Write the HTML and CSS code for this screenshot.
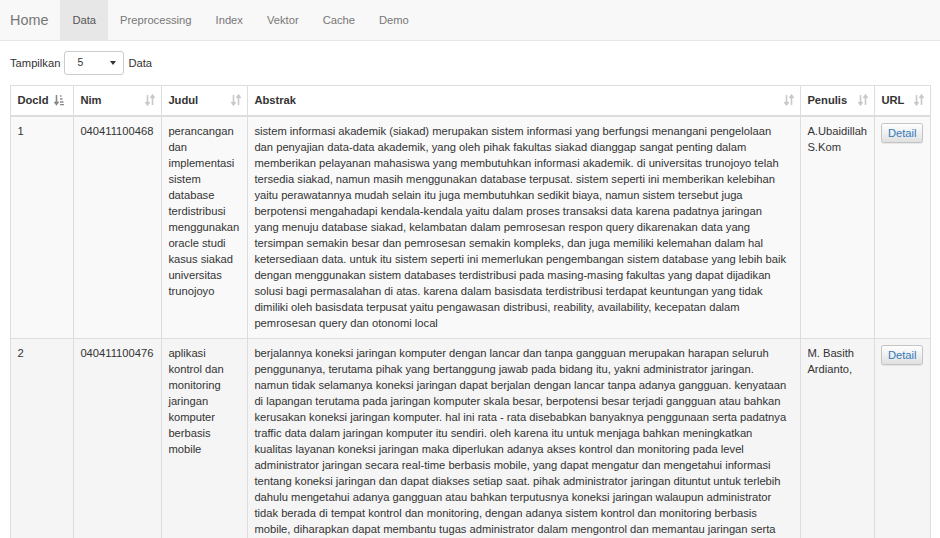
FILE: index.html
```html
<!DOCTYPE html>
<html lang="id">
<head>
<meta charset="utf-8">
<title>Data</title>
<link rel="stylesheet" href="styles.css">
</head>
<body>
<nav class="navbar">
  <a class="brand" href="#">Home</a>
  <ul class="nav">
    <li class="active"><a href="#">Data</a></li>
    <li><a href="#">Preprocessing</a></li>
    <li><a href="#">Index</a></li>
    <li><a href="#">Vektor</a></li>
    <li><a href="#">Cache</a></li>
    <li><a href="#">Demo</a></li>
  </ul>
</nav>
<main class="content">
  <div class="length">
    <span>Tampilkan</span>
    <div class="select"><span>5</span><svg class="caret" width="6" height="4" viewBox="0 0 6 4"><path d="M0 0H6L3 4Z" fill="#333"/></svg></div>
    <span>Data</span>
  </div>
  <table class="table">
    <colgroup>
      <col class="c-id"><col class="c-nim"><col class="c-judul"><col class="c-abs"><col class="c-pen"><col class="c-url">
    </colgroup>
    <thead>
      <tr>
        <th><div class="th"><span>DocId</span><svg class="sort active" width="10" height="12" viewBox="0 0 10 12"><path d="M2.5 1V10M0.5 7.8L2.5 10.5L4.5 7.8" stroke="currentColor" stroke-width="1.6" fill="none"/><path d="M6 2H7.5M6 5H8.5M6 8H9.5M6 10.6H10" stroke="currentColor" stroke-width="1.3"/></svg></div></th>
        <th><div class="th"><span>Nim</span><svg class="sort" width="10" height="12" viewBox="0 0 10 12"><path d="M2.5 1V10.5M0.5 8L2.5 10.8L4.5 8M7.5 11V1.5M5.5 4L7.5 1.2L9.5 4" stroke="currentColor" stroke-width="1.6" fill="none"/></svg></div></th>
        <th><div class="th"><span>Judul</span><svg class="sort" width="10" height="12" viewBox="0 0 10 12"><path d="M2.5 1V10.5M0.5 8L2.5 10.8L4.5 8M7.5 11V1.5M5.5 4L7.5 1.2L9.5 4" stroke="currentColor" stroke-width="1.6" fill="none"/></svg></div></th>
        <th><div class="th"><span>Abstrak</span><svg class="sort" width="10" height="12" viewBox="0 0 10 12"><path d="M2.5 1V10.5M0.5 8L2.5 10.8L4.5 8M7.5 11V1.5M5.5 4L7.5 1.2L9.5 4" stroke="currentColor" stroke-width="1.6" fill="none"/></svg></div></th>
        <th><div class="th"><span>Penulis</span><svg class="sort" width="10" height="12" viewBox="0 0 10 12"><path d="M2.5 1V10.5M0.5 8L2.5 10.8L4.5 8M7.5 11V1.5M5.5 4L7.5 1.2L9.5 4" stroke="currentColor" stroke-width="1.6" fill="none"/></svg></div></th>
        <th><div class="th"><span>URL</span><svg class="sort" width="10" height="12" viewBox="0 0 10 12"><path d="M2.5 1V10.5M0.5 8L2.5 10.8L4.5 8M7.5 11V1.5M5.5 4L7.5 1.2L9.5 4" stroke="currentColor" stroke-width="1.6" fill="none"/></svg></div></th>
      </tr>
    </thead>
    <tbody>
      <tr class="odd">
        <td>1</td>
        <td>040411100468</td>
        <td>perancangan dan implementasi sistem database terdistribusi menggunakan oracle studi kasus siakad universitas trunojoyo</td>
        <td class="abs">sistem informasi akademik (siakad) merupakan sistem informasi yang berfungsi menangani pengelolaan<br>dan penyajian data-data akademik, yang oleh pihak fakultas siakad dianggap sangat penting dalam<br>memberikan pelayanan mahasiswa yang membutuhkan informasi akademik. di universitas trunojoyo telah<br>tersedia siakad, namun masih menggunakan database terpusat. sistem seperti ini memberikan kelebihan<br>yaitu perawatannya mudah selain itu juga membutuhkan sedikit biaya, namun sistem tersebut juga<br>berpotensi mengahadapi kendala-kendala yaitu dalam proses transaksi data karena padatnya jaringan<br>yang menuju database siakad, kelambatan dalam pemrosesan respon query dikarenakan data yang<br>tersimpan semakin besar dan pemrosesan semakin kompleks, dan juga memiliki kelemahan dalam hal<br>ketersediaan data. untuk itu sistem seperti ini memerlukan pengembangan sistem database yang lebih baik<br>dengan menggunakan sistem databases terdistribusi pada masing-masing fakultas yang dapat dijadikan<br>solusi bagi permasalahan di atas. karena dalam basisdata terdistribusi terdapat keuntungan yang tidak<br>dimiliki oleh basisdata terpusat yaitu pengawasan distribusi, reability, availability, kecepatan dalam<br>pemrosesan query dan otonomi local</td>
        <td>A.Ubaidillah S.Kom</td>
        <td><button class="btn" type="button">Detail</button></td>
      </tr>
      <tr class="hover">
        <td>2</td>
        <td>040411100476</td>
        <td>aplikasi kontrol dan monitoring jaringan komputer berbasis mobile</td>
        <td class="abs">berjalannya koneksi jaringan komputer dengan lancar dan tanpa gangguan merupakan harapan seluruh<br>penggunanya, terutama pihak yang bertanggung jawab pada bidang itu, yakni administrator jaringan.<br>namun tidak selamanya koneksi jaringan dapat berjalan dengan lancar tanpa adanya gangguan. kenyataan<br>di lapangan terutama pada jaringan komputer skala besar, berpotensi besar terjadi gangguan atau bahkan<br>kerusakan koneksi jaringan komputer. hal ini rata - rata disebabkan banyaknya penggunaan serta padatnya<br>traffic data dalam jaringan komputer itu sendiri. oleh karena itu untuk menjaga bahkan meningkatkan<br>kualitas layanan koneksi jaringan maka diperlukan adanya akses kontrol dan monitoring pada level<br>administrator jaringan secara real-time berbasis mobile, yang dapat mengatur dan mengetahui informasi<br>tentang koneksi jaringan dan dapat diakses setiap saat. pihak administrator jaringan dituntut untuk terlebih<br>dahulu mengetahui adanya gangguan atau bahkan terputusnya koneksi jaringan walaupun administrator<br>tidak berada di tempat kontrol dan monitoring, dengan adanya sistem kontrol dan monitoring berbasis<br>mobile, diharapkan dapat membantu tugas administrator dalam mengontrol dan memantau jaringan serta<br>mengetahui informasi jaringan secara cepat dan tepat.</td>
        <td>M. Basith Ardianto,</td>
        <td><button class="btn" type="button">Detail</button></td>
      </tr>
    </tbody>
  </table>
</main>
</body>
</html>
```
FILE: styles.css
```css
* { box-sizing: border-box; }
html, body { margin: 0; padding: 0; }
body {
  font-family: "Liberation Sans", Arial, Helvetica, sans-serif;
  font-size: 11.2px;
  line-height: 16px;
  color: #333;
  background: #fff;
  overflow: hidden;
}
a { text-decoration: none; }

.navbar {
  display: flex;
  align-items: stretch;
  height: 41px;
  background: #f8f8f8;
  border-bottom: 1px solid #e7e7e7;
}
.brand {
  display: block;
  padding: 0 12px 0 10px;
  font-size: 14.4px;
  line-height: 40px;
  color: #777;
}
.nav {
  display: flex;
  margin: 0;
  padding: 0;
  list-style: none;
}
.nav li a {
  display: block;
  padding: 0 12px;
  line-height: 40px;
  color: #777;
}
.nav li.active a {
  background: #e7e7e7;
  color: #555;
}

.content { padding: 10px 10px 0 10px; }

.length {
  display: flex;
  align-items: center;
  gap: 4px;
  height: 24px;
  margin-bottom: 10px;
}
.select {
  display: flex;
  align-items: center;
  justify-content: space-between;
  width: 60px;
  height: 24px;
  padding: 0 7px 0 12px;
  border: 1px solid #ccc;
  border-radius: 3px;
  background: #fff;
  font-size: 10.4px;
}
.caret { display: block; }

.table {
  width: 920px;
  table-layout: fixed;
  border-collapse: collapse;
  border: 1px solid #ddd;
}
.c-id { width: 63px; }
.c-nim { width: 88px; }
.c-judul { width: 86px; }
.c-abs { width: 553px; }
.c-pen { width: 74px; }
.c-url { width: 56px; }

.table th, .table td {
  border: 1px solid #ddd;
  padding: 6.4px;
  vertical-align: top;
  text-align: left;
}
.table td.abs { white-space: nowrap; overflow: hidden; }
.table th {
  vertical-align: bottom;
  border-bottom: 2px solid #ddd;
  font-weight: bold;
  padding-right: 6px;
}
.th {
  display: flex;
  align-items: center;
  justify-content: space-between;
}
.sort { display: block; color: #c9c9c9; flex: none; }
.sort.active { color: #8a8a8a; margin-right: 3px; }

.table tr.odd td { background: #f9f9f9; }
.table tr.hover td { background: #f5f5f5; }

.btn {
  display: inline-block;
  font-family: inherit;
  font-size: 11.2px;
  line-height: 14px;
  padding: 2px 5.5px;
  color: #337ab7;
  border: 1px solid #c4c4c4;
  border-radius: 2.4px;
  background: linear-gradient(to bottom, #ffffff 0%, #e0e0e0 100%);
  box-shadow: inset 0 1px 0 rgba(255,255,255,.15), 0 1px 1px rgba(0,0,0,.075);
  cursor: pointer;
}
```
